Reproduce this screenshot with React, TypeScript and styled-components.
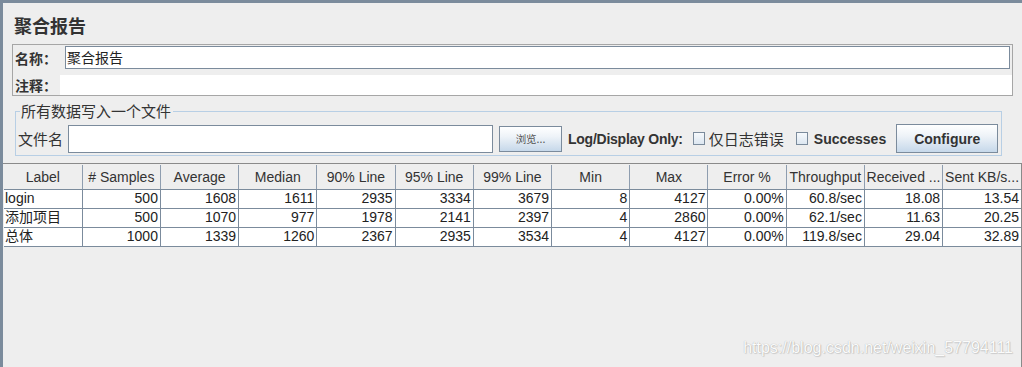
import React from "react";
import styled, { createGlobalStyle } from "styled-components";

const GlobalStyle = createGlobalStyle`
  html, body { margin: 0; padding: 0; background: #eeeeee; }
  body {
    font-family: "Liberation Sans", "Noto Sans CJK SC", sans-serif;
    color: #333333;
  }
  * { box-sizing: border-box; }
`;

const SLATE = "#7b8b9c";

const Frame = styled.div`
  width: 1022px;
  height: 367px;
  border-top: 3px solid ${SLATE};
  border-left: 3px solid ${SLATE};
  background: #eeeeee;
  display: flex;
  flex-direction: column;
  overflow: hidden;
`;

const Title = styled.div`
  margin: 11px 0 0 11px;
  font-size: 18px;
  line-height: 22px;
  font-weight: bold;
  color: #333333;
  font-family: "Noto Sans CJK SC", sans-serif;
`;

const NamePanel = styled.div`
  margin: 8px 0 0 9px;
  width: 1001px;
  border: 1px solid #a6a6a6;
  padding-top: 1px;
  display: flex;
  flex-direction: column;
  gap: 6px;
`;

const FieldRow = styled.div<{ $h: number }>`
  display: flex;
  align-items: center;
  height: ${(p) => p.$h}px;
`;

const FieldLabel = styled.div<{ $w: number }>`
  width: ${(p) => p.$w}px;
  flex-shrink: 0;
  padding-left: 2px;
  font-size: 14px;
  font-weight: bold;
  color: #333333;
  font-family: "Noto Sans CJK SC", sans-serif;
  white-space: nowrap;
`;

const NameInput = styled.div`
  flex: 1;
  height: 23px;
  margin-right: 2px;
  background: #ffffff;
  border: 1px solid ${SLATE};
  padding-left: 1px;
  font-size: 14px;
  line-height: 21px;
  color: #222222;
  font-family: "Noto Sans CJK SC", sans-serif;
`;

const CommentArea = styled.div`
  flex: 1;
  height: 20px;
  background: #ffffff;
`;

const FileSet = styled.fieldset`
  margin: 6px 0 0 12px;
  width: 987px;
  border: 1px solid #b8cfe5;
  padding: 4px 1px 2px 2px;
  min-width: 0;
`;

const Legend = styled.legend`
  margin-left: 2px;
  padding: 0 2px 0 1px;
  font-size: 15px;
  line-height: 18px;
  color: #333333;
  font-family: "Noto Sans CJK SC", sans-serif;
`;

const FileRow = styled.div`
  display: flex;
  align-items: center;
  height: 29px;
`;

const CjkText = styled.span<{ $ml?: number }>`
  margin-left: ${(p) => p.$ml ?? 0}px;
  flex-shrink: 0;
  font-size: 15px;
  line-height: 18px;
  color: #333333;
  font-family: "Noto Sans CJK SC", sans-serif;
  white-space: nowrap;
`;

const BoldText = styled.span<{ $ml?: number; $ls?: number }>`
  margin-left: ${(p) => p.$ml ?? 0}px;
  flex-shrink: 0;
  font-size: 14px;
  font-weight: bold;
  letter-spacing: ${(p) => p.$ls ?? 0}px;
  color: #333333;
  white-space: nowrap;
`;

const FileInput = styled.div`
  margin-left: 5px;
  width: 425px;
  flex-shrink: 0;
  height: 28px;
  background: #ffffff;
  border: 1px solid ${SLATE};
`;

const Button = styled.div<{ $w: number; $h: number; $ml: number }>`
  margin-left: ${(p) => p.$ml}px;
  width: ${(p) => p.$w}px;
  height: ${(p) => p.$h}px;
  border: 1px solid ${SLATE};
  background: linear-gradient(#ffffff 0%, #eef3f8 40%, #c6d8ea 100%);
  display: flex;
  align-items: center;
  justify-content: center;
  flex-shrink: 0;
`;

const BrowseText = styled.span`
  font-size: 10.5px;
  color: #555555;
  font-family: "Noto Sans CJK SC", sans-serif;
`;

const Check = styled.div<{ $ml: number }>`
  margin-left: ${(p) => p.$ml}px;
  width: 12px;
  height: 13px;
  border: 1px solid ${SLATE};
  background: linear-gradient(#f6f9fc, #dde7f1);
  flex-shrink: 0;
`;

const Pane = styled.div`
  margin-top: 7px;
  flex: 1;
  border-top: 1px solid #8a8a8a;
  border-right: 1px solid #8a8a8a;
  padding-left: 1px;
  position: relative;
`;

const Table = styled.table`
  margin-top: 1px;
  width: 1017px;
  table-layout: fixed;
  border-collapse: collapse;
  background: #ffffff;
  font-size: 14px;
`;

const Th = styled.th`
  height: 24px;
  padding: 0 1px;
  background: #eeeeee;
  font-weight: normal;
  color: #333333;
  text-align: center;
  white-space: nowrap;
  overflow: hidden;
  border-right: 1px solid #8e9daf;
  border-bottom: 1px solid ${SLATE};
  &:last-child { border-right: none; }
`;

const Td = styled.td<{ $left?: boolean }>`
  height: 19px;
  padding: 0 2px 0 1px;
  color: #222222;
  text-align: ${(p) => (p.$left ? "left" : "right")};
  white-space: nowrap;
  overflow: hidden;
  line-height: 17px;
  border-right: 1px solid ${SLATE};
  border-bottom: 1px solid ${SLATE};
  &:last-child { border-right: none; }
`;

const Watermark = styled.div`
  position: absolute;
  right: 8px;
  bottom: 10px;
  font-size: 16px;
  line-height: 18px;
  color: #fbfbfb;
  text-shadow: 0 0 1px rgba(0, 0, 0, 0.3), 1px 1px 1px rgba(0, 0, 0, 0.12);
`;

const headers = [
  "Label",
  "# Samples",
  "Average",
  "Median",
  "90% Line",
  "95% Line",
  "99% Line",
  "Min",
  "Max",
  "Error %",
  "Throughput",
  "Received ...",
  "Sent KB/s...",
];

const rows = [
  ["login", "500", "1608", "1611", "2935", "3334", "3679", "8", "4127", "0.00%", "60.8/sec", "18.08", "13.54"],
  ["添加项目", "500", "1070", "977", "1978", "2141", "2397", "4", "2860", "0.00%", "62.1/sec", "11.63", "20.25"],
  ["总体", "1000", "1339", "1260", "2367", "2935", "3534", "4", "4127", "0.00%", "119.8/sec", "29.04", "32.89"],
];

export default function App() {
  return (
    <>
      <GlobalStyle />
      <Frame>
        <Title>聚合报告</Title>
        <NamePanel>
          <FieldRow $h={23}>
            <FieldLabel $w={52}>名称：</FieldLabel>
            <NameInput>聚合报告</NameInput>
          </FieldRow>
          <FieldRow $h={20}>
            <FieldLabel $w={47}>注释：</FieldLabel>
            <CommentArea />
          </FieldRow>
        </NamePanel>
        <FileSet>
          <Legend>所有数据写入一个文件</Legend>
          <FileRow>
            <CjkText>文件名</CjkText>
            <FileInput />
            <Button $w={63} $h={26} $ml={6}>
              <BrowseText>浏览...</BrowseText>
            </Button>
            <BoldText $ml={6} $ls={-0.25}>Log/Display Only:</BoldText>
            <Check $ml={10} />
            <CjkText $ml={4}>仅日志错误</CjkText>
            <Check $ml={12} />
            <BoldText $ml={6}>Successes</BoldText>
            <Button $w={102} $h={29} $ml={10}>
              <BoldText>Configure</BoldText>
            </Button>
          </FileRow>
        </FileSet>
        <Pane>
          <Table>
            <thead>
              <tr>
                {headers.map((h) => (
                  <Th key={h}>{h}</Th>
                ))}
              </tr>
            </thead>
            <tbody>
              {rows.map((r) => (
                <tr key={r[0]}>
                  {r.map((c, i) => (
                    <Td key={i} $left={i === 0}>
                      {c}
                    </Td>
                  ))}
                </tr>
              ))}
            </tbody>
          </Table>
          <Watermark>https://blog.csdn.net/weixin_57794111</Watermark>
        </Pane>
      </Frame>
    </>
  );
}
